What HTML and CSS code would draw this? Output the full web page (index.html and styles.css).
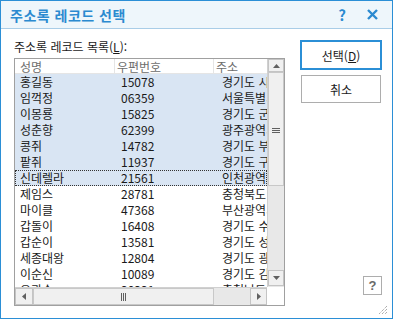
FILE: index.html
```html
<!DOCTYPE html>
<html lang="ko">
<head>
    <meta charset="UTF-8">
    <title>주소록 레코드 선택</title>
    <link rel="stylesheet" href="styles.css">
</head>
<body>
    <div class="dialog">
        <div class="titlebar">
            <span class="title">주소록 레코드 선택</span>
            <span class="title-help">?</span>
            <svg class="title-close" width="11" height="11" viewBox="0 0 11 11">
                <path d="M1 1 L10 10 M10 1 L1 10" stroke="#2b8ad0" stroke-width="2.4" fill="none"/>
            </svg>
        </div>
        <div class="dialog-body">
            <div class="left-col">
                <div class="list-label">주소록 레코드 목록(<u>L</u>):</div>
                <div class="listview">
                    <div class="list-content">
                        <div class="row header">
                            <div class="cell c1">성명</div>
                            <div class="cell c2">우편번호</div>
                            <div class="cell c3">주소</div>
                        </div>
                        <div class="row selected"><div class="cell c1">홍길동</div><div class="cell c2">15078</div><div class="cell c3">경기도 시흥시</div></div>
                        <div class="row selected"><div class="cell c1">임꺽정</div><div class="cell c2">06359</div><div class="cell c3">서울특별시</div></div>
                        <div class="row selected"><div class="cell c1">이몽룡</div><div class="cell c2">15825</div><div class="cell c3">경기도 군포시</div></div>
                        <div class="row selected"><div class="cell c1">성춘향</div><div class="cell c2">62399</div><div class="cell c3">광주광역시</div></div>
                        <div class="row selected"><div class="cell c1">콩쥐</div><div class="cell c2">14782</div><div class="cell c3">경기도 부천시</div></div>
                        <div class="row selected"><div class="cell c1">팥쥐</div><div class="cell c2">11937</div><div class="cell c3">경기도 구리시</div></div>
                        <div class="row selected focused"><div class="cell c1">신데렐라</div><div class="cell c2">21561</div><div class="cell c3">인천광역시</div></div>
                        <div class="row"><div class="cell c1">제임스</div><div class="cell c2">28781</div><div class="cell c3">충청북도</div></div>
                        <div class="row"><div class="cell c1">마이클</div><div class="cell c2">47368</div><div class="cell c3">부산광역시</div></div>
                        <div class="row"><div class="cell c1">갑돌이</div><div class="cell c2">16408</div><div class="cell c3">경기도 수원시</div></div>
                        <div class="row"><div class="cell c1">갑순이</div><div class="cell c2">13581</div><div class="cell c3">경기도 성남시</div></div>
                        <div class="row"><div class="cell c1">세종대왕</div><div class="cell c2">12804</div><div class="cell c3">경기도 광주시</div></div>
                        <div class="row"><div class="cell c1">이순신</div><div class="cell c2">10089</div><div class="cell c3">경기도 김포시</div></div>
                        <div class="row"><div class="cell c1">유관순</div><div class="cell c2">30331</div><div class="cell c3">충청남도</div></div>
                    </div>
                    <div class="vscroll">
                        <div class="sb-btn up">
                            <svg width="7" height="4" viewBox="0 0 7 4"><path d="M0 4 L3.5 0 L7 4 Z" fill="#606060"/></svg>
                        </div>
                        <div class="vthumb"><span class="grip-h"></span></div>
                        <div class="sb-track"></div>
                        <div class="sb-btn down">
                            <svg width="7" height="4" viewBox="0 0 7 4"><path d="M0 0 L7 0 L3.5 4 Z" fill="#606060"/></svg>
                        </div>
                    </div>
                    <div class="hscroll">
                        <div class="sb-btn left">
                            <svg width="4" height="7" viewBox="0 0 4 7"><path d="M4 0 L4 7 L0 3.5 Z" fill="#606060"/></svg>
                        </div>
                        <div class="hthumb"><span class="grip-v"></span></div>
                        <div class="sb-track"></div>
                        <div class="sb-btn right">
                            <svg width="4" height="7" viewBox="0 0 4 7"><path d="M0 0 L4 3.5 L0 7 Z" fill="#606060"/></svg>
                        </div>
                    </div>
                    <div class="corner"></div>
                </div>
            </div>
            <div class="right-col">
                <button class="btn default">선택(<u>D</u>)</button>
                <button class="btn">취소</button>
                <button class="help-btn">?</button>
            </div>
        </div>
        <svg class="grip" width="10" height="10" viewBox="0 0 10 10">
            <path d="M9 1 L1 9 M9 4 L4 9 M9 7 L7 9" stroke="#8a8a8a" stroke-width="1" stroke-dasharray="1 1" fill="none"/>
        </svg>
    </div>
</body>
</html>
```

FILE: styles.css
```css
* {
    box-sizing: border-box;
}

body {
    margin: 0;
    background: #ffffff;
    font-family: "Noto Sans CJK KR", "Noto Sans", sans-serif;
    font-size: 12px;
    color: #1a1a1a;
}

.dialog {
    position: relative;
    width: 393px;
    height: 319px;
    border: 1px solid #2b8fd6;
    display: flex;
    flex-direction: column;
    background: #ffffff;
}

.titlebar {
    height: 28px;
    background: #eef6fb;
    border-bottom: 1px solid #a9cde7;
    display: flex;
    align-items: center;
    padding-left: 9px;
}

.title {
    font-size: 14px;
    font-weight: bold;
    color: #2b8ad0;
    letter-spacing: 0.5px;
    flex: 1;
}

.title-help {
    font-size: 15px;
    font-weight: bold;
    color: #2b8ad0;
    margin-right: 21px;
}

.title-close {
    margin-right: 14px;
}

.dialog-body {
    flex: 1;
    display: flex;
    padding: 11px 10px 12px 13px;
}

.left-col {
    width: 271px;
    display: flex;
    flex-direction: column;
}

.list-label {
    height: 14px;
    line-height: 14px;
    margin-bottom: 4px;
}

.listview {
    width: 271px;
    height: 248px;
    border: 1px solid #a0a0a0;
    display: grid;
    grid-template-columns: 252px 17px;
    grid-template-rows: 228px 18px;
}

.list-content {
    overflow: hidden;
}

.row {
    display: flex;
    height: 16px;
    line-height: 16px;
    white-space: nowrap;
}

.row.header {
    height: 15px;
    line-height: 15px;
    color: #6d6d6d;
    border-bottom: 1px solid #e5e5e5;
}

.row.selected {
    background: #d9e5f3;
}

.row.focused {
    outline: 1px dotted #333333;
    outline-offset: -1px;
}

.cell {
    flex-shrink: 0;
}

.c1 {
    width: 100px;
    padding-left: 5px;
}

.c2 {
    width: 99px;
    padding-left: 6px;
}

.c3 {
    width: 120px;
    padding-left: 8px;
}

.header .c1 {
    border-right: 1px solid #e5e5e5;
}

.header .c2 {
    padding-left: 2px;
    border-right: 1px solid #e5e5e5;
}

.header .c3 {
    padding-left: 2px;
}

.vscroll {
    display: flex;
    flex-direction: column;
    background: #e8e8e8;
    border-left: 1px solid #d0d0d0;
}

.hscroll {
    display: flex;
    background: #e8e8e8;
    border-top: 1px solid #d0d0d0;
}

.corner {
    background: #ffffff;
}

.sb-btn {
    display: flex;
    align-items: center;
    justify-content: center;
    background: #f0f0f0;
    border: 1px solid #c4c4c4;
}

.sb-btn.up {
    height: 13px;
}

.sb-btn.down {
    height: 16px;
    margin-bottom: 1px;
}

.sb-btn.left {
    width: 18px;
}

.sb-btn.right {
    width: 17px;
}

.sb-track {
    flex: 1;
}

.vthumb {
    height: 114px;
    background: #f0f0f0;
    border: 1px solid #c8c8c8;
    display: flex;
    align-items: center;
    justify-content: center;
}

.hthumb {
    width: 181px;
    background: #f0f0f0;
    border: 1px solid #c8c8c8;
    display: flex;
    align-items: center;
    justify-content: center;
}

.grip-h {
    width: 8px;
    height: 5px;
    border-top: 1px solid #606060;
    border-bottom: 1px solid #606060;
    margin-top: 2px;
}

.grip-h::after {
    content: "";
    display: block;
    margin-top: 1px;
    border-top: 1px solid #606060;
}

.grip-v {
    width: 5px;
    height: 8px;
    border-left: 1px solid #606060;
    border-right: 1px solid #606060;
    display: flex;
    justify-content: center;
}

.grip-v::after {
    content: "";
    width: 1px;
    background: #606060;
}

.right-col {
    display: flex;
    flex-direction: column;
    align-items: flex-start;
    margin-left: 16px;
    width: 82px;
}

.btn {
    width: 80px;
    height: 28px;
    border: 1px solid #adadad;
    background: #ffffff;
    font-family: inherit;
    font-size: 12px;
    color: #1a1a1a;
    padding: 0;
}

.btn.default {
    margin-top: 1px;
    border-color: #2b8fd6;
    box-shadow: 0 0 0 1px #2b8fd6;
    margin-bottom: 6px;
}

.help-btn {
    margin-top: auto;
    margin-bottom: 11px;
    align-self: flex-end;
    width: 19px;
    height: 19px;
    border: 1px solid #adadad;
    background: #ffffff;
    color: #6a6a6a;
    font-weight: bold;
    font-size: 13px;
    font-family: "Liberation Sans", sans-serif;
    padding: 0;
    line-height: 16px;
}

.grip {
    position: absolute;
    right: 4px;
    bottom: 3px;
}
```
